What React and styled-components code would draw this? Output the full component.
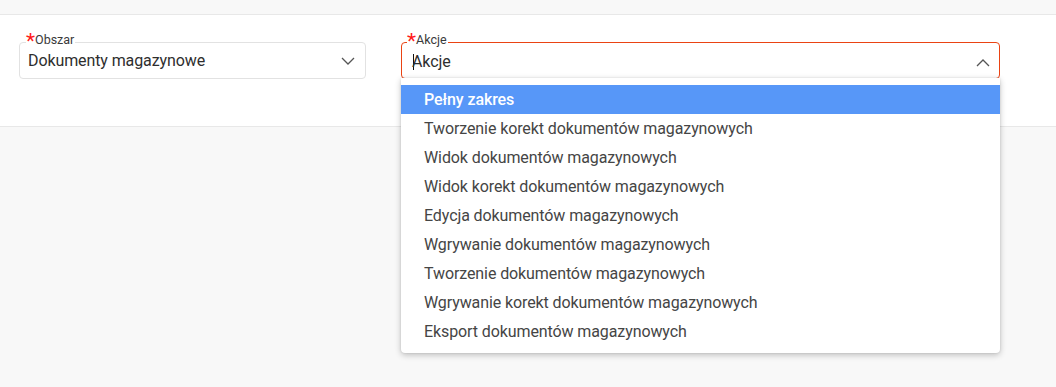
import React from "react";
import styled, { createGlobalStyle } from "styled-components";

const Global = createGlobalStyle`
  html, body { margin: 0; padding: 0; background: #f8f8f8; }
  body { font-family: Roboto, "Liberation Sans", Arial, sans-serif; }
  * { box-sizing: border-box; }
`;

const Page = styled.div`
  width: 1056px;
  height: 387px;
  background: #f8f8f8;
  overflow: hidden;
`;

const TopStrip = styled.div`
  height: 15px;
  background: #f8f8f8;
  border-bottom: 1px solid #e8e8e8;
`;

const FormPanel = styled.div`
  height: 112px;
  background: #ffffff;
  border-bottom: 1px solid #e8e8e8;
  display: flex;
  gap: 35px;
  padding: 27px 0 0 19px;
`;

const Field = styled.div`
  position: relative;
  width: ${(p) => p.$width}px;
`;

const Box = styled.div`
  height: 37px;
  border: 1px solid ${(p) => (p.$active ? "#ea4313" : "#e2e2e2")};
  border-radius: 4px;
  display: flex;
  align-items: center;
  padding: 0 10px 0 ${(p) => p.$padLeft}px;
  background: #fff;
`;

const Label = styled.span`
  position: absolute;
  top: -9px;
  left: ${(p) => p.$left}px;
  background: #fff;
  font-size: 12.5px;
  line-height: 14px;
  color: #3a3a3a;
  padding-right: 1px;
  display: flex;
  align-items: flex-end;
`;

const Star = styled.span`
  color: #ff1a1a;
  font-size: 21px;
  line-height: 14px;
  height: 13px;
`;

const Value = styled.span`
  flex: 1;
  font-size: 16px;
  line-height: 20px;
  letter-spacing: -0.1px;
  color: #2e2e2e;
  margin-top: ${(p) => p.$shift || 0}px;
  display: flex;
  align-items: center;
`;

const Caret = styled.span`
  display: inline-block;
  width: 1px;
  height: 16px;
  background: #111;
  margin-right: -2px;
`;

const Chevron = styled.svg`
  flex: none;
  width: 14px;
  height: 8px;
  margin-top: ${(p) => p.$shift || 0}px;
  margin-right: ${(p) => p.$right || 0}px;
`;

const Menu = styled.ul`
  position: absolute;
  top: 36px;
  left: 0;
  right: 0;
  margin: 0;
  padding: 7px 0;
  list-style: none;
  background: #fff;
  border-radius: 0 0 4px 4px;
  box-shadow: 0 2px 6px rgba(0, 0, 0, 0.24), 0 0 2px rgba(0, 0, 0, 0.12);
  z-index: 5;
`;

const Item = styled.li`
  height: 29px;
  line-height: 29px;
  padding-left: 23px;
  font-size: 16px;
  letter-spacing: -0.1px;
  color: ${(p) => (p.$selected ? "#ffffff" : "#454545")};
  font-weight: ${(p) => (p.$selected ? 500 : 400)};
  background: ${(p) => (p.$selected ? "#5797f8" : "transparent")};
`;

const ChevronDown = (props) => (
  <Chevron viewBox="0 0 14 8" {...props}>
    <polyline points="1,1 7,7 13,1" fill="none" stroke="#555" strokeWidth="1.3" />
  </Chevron>
);

const ChevronUp = (props) => (
  <Chevron viewBox="0 0 14 8" {...props}>
    <polyline points="1,7 7,1 13,7" fill="none" stroke="#555" strokeWidth="1.3" />
  </Chevron>
);

const options = [
  "Pełny zakres",
  "Tworzenie korekt dokumentów magazynowych",
  "Widok dokumentów magazynowych",
  "Widok korekt dokumentów magazynowych",
  "Edycja dokumentów magazynowych",
  "Wgrywanie dokumentów magazynowych",
  "Tworzenie dokumentów magazynowych",
  "Wgrywanie korekt dokumentów magazynowych",
  "Eksport dokumentów magazynowych",
];

export default function App() {
  return (
    <Page>
      <Global />
      <TopStrip />
      <FormPanel>
        <Field $width={347}>
          <Box $padLeft={8}>
            <Value>Dokumenty magazynowe</Value>
            <ChevronDown $right={0} />
          </Box>
          <Label $left={7}>
            <Star>*</Star>Obszar
          </Label>
        </Field>
        <Field $width={599}>
          <Box $active $padLeft={11}>
            <Value $shift={2}>
              <Caret />
              Akcje
            </Value>
            <ChevronUp $shift={5} $right={-1} />
          </Box>
          <Label $left={6}>
            <Star>*</Star>Akcje
          </Label>
          <Menu>
            {options.map((o, i) => (
              <Item key={o} $selected={i === 0}>
                {o}
              </Item>
            ))}
          </Menu>
        </Field>
      </FormPanel>
    </Page>
  );
}
